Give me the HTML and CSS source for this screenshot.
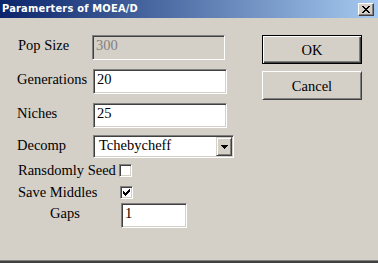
FILE: index.html
```html
<!DOCTYPE html>
<html>
<head>
<meta charset="utf-8">
<link rel="stylesheet" href="styles.css">
</head>
<body>
<div class="window">
  <div class="titlebar">
    <span class="title">Paramerters of MOEA/D</span>
    <span class="close"><svg width="8" height="7" viewBox="0 0 8 7" shape-rendering="crispEdges"><path d="M0 0h2v1h-2z M6 0h2v1h-2z M1 1h2v1h-2z M5 1h2v1h-2z M2 2h4v1h-4z M3 3h2v1h-2z M2 4h4v1h-4z M1 5h2v1h-2z M5 5h2v1h-2z M0 6h2v1h-2z M6 6h2v1h-2z" fill="#000"/></svg></span>
  </div>
  <div class="client">
    <div class="form">
      <div class="row">
        <span class="label label-pop">Pop Size</span>
        <div class="edit edit-pop disabled">300</div>
      </div>
      <div class="row row-gap">
        <span class="label">Generations</span>
        <div class="edit">20</div>
      </div>
      <div class="row row-gap">
        <span class="label">Niches</span>
        <div class="edit">25</div>
      </div>
      <div class="row row-decomp">
        <span class="label">Decomp</span>
        <div class="combo">
          <span class="combo-text">Tchebycheff</span>
          <span class="drop"><svg width="7" height="4" viewBox="0 0 7 4" shape-rendering="crispEdges"><path d="M0 0h7v1h-7z M1 1h5v1h-5z M2 2h3v1h-3z M3 3h1v1h-1z" fill="#000"/></svg></span>
        </div>
      </div>
      <div class="row row-check row-seed">
        <span class="label label-seed">Ransdomly Seed</span>
        <span class="check"></span>
      </div>
      <div class="row row-check row-save">
        <span class="label label-save">Save Middles</span>
        <span class="check"><svg width="11" height="11" viewBox="0 0 11 11" shape-rendering="crispEdges"><path d="M2 4h1v3h-1z M3 5h1v3h-1z M4 6h1v3h-1z M5 5h1v3h-1z M6 4h1v3h-1z M7 3h1v3h-1z M8 2h1v3h-1z" fill="#000"/></svg></span>
      </div>
      <div class="row row-gaps">
        <span class="label label-gaps">Gaps</span>
        <div class="edit edit-gaps">1</div>
      </div>
    </div>
    <div class="buttons">
      <div class="btn btn-default">OK</div>
      <div class="btn">Cancel</div>
    </div>
  </div>
</div>
</body>
</html>
```

FILE: styles.css
```css
html, body {
  margin: 0;
  padding: 0;
}
body {
  width: 378px;
  height: 263px;
  overflow: hidden;
  background: #d4d0c8;
  font-family: "Liberation Serif", "Times New Roman", serif;
  font-size: 14.5px;
  color: #000;
}
.window {
  height: 263px;
  box-sizing: border-box;
  border-bottom: 2px solid #404040;
  box-shadow: inset 0 -1px #808080;
}
.titlebar {
  height: 18px;
  display: flex;
  justify-content: space-between;
  align-items: flex-start;
  padding: 0 4px 0 2px;
  background: linear-gradient(to right, #0a246a, #a6caf0);
}
.title {
  color: #fff;
  font-family: "DejaVu Sans Condensed", "DejaVu Sans", sans-serif;
  font-weight: bold;
  font-size: 11px;
  line-height: 18px;
  letter-spacing: 0.2px;
}
.close {
  margin-top: 3px;
  width: 16px;
  height: 13px;
  box-sizing: border-box;
  background: #d4d0c8;
  border: 1px solid;
  border-color: #fff #404040 #404040 #fff;
  box-shadow: inset -1px -1px #808080;
  display: flex;
  align-items: center;
  justify-content: center;
}
.close svg { display: block; }
.client {
  display: flex;
  padding: 17px 0 0 16px;
}
.form {
  width: 246px;
}
.row {
  display: flex;
  align-items: baseline;
}
.row-gap { margin-top: 9px; }
.row-decomp { margin-top: 7px; }
.label {
  flex: 0 0 77px;
  box-sizing: border-box;
  padding-left: 1px;
  line-height: 16px;
  white-space: nowrap;
}
.label-pop {
  flex-basis: 76px;
  padding-left: 2px;
}
.edit {
  width: 134px;
  height: 25px;
  box-sizing: border-box;
  padding: 1px 3px 0 3px;
  line-height: 16px;
  background: #fff;
  border: 1px solid;
  border-color: #808080 #fff #fff #808080;
  box-shadow: inset 1px 1px #404040, inset -1px -1px #d4d0c8;
}
.edit-pop { width: 133px; }
.disabled {
  background: #d4d0c8;
  color: #808080;
}
.combo {
  width: 141px;
  height: 23px;
  box-sizing: border-box;
  padding: 1px;
  display: flex;
  background: #fff;
  border: 1px solid;
  border-color: #808080 #fff #fff #808080;
  box-shadow: inset 1px 1px #404040, inset -1px -1px #d4d0c8;
}
.combo-text {
  flex: 1;
  padding-left: 4px;
  line-height: 16px;
}
.drop {
  width: 16px;
  box-sizing: border-box;
  background: #d4d0c8;
  border: 1px solid;
  border-color: #d4d0c8 #404040 #404040 #d4d0c8;
  box-shadow: inset 1px 1px #fff, inset -1px -1px #808080;
  display: flex;
  align-items: center;
  justify-content: center;
}
.drop svg { display: block; margin-top: 1px; }
.row-check {
  align-items: flex-start;
}
.row-seed { margin-top: 4px; }
.row-save { margin-top: 6px; }
.label-seed {
  flex-basis: 103px;
  padding-left: 2px;
}
.label-save {
  flex-basis: 104px;
  padding-left: 2px;
}
.check {
  margin-top: 2px;
  width: 13px;
  height: 13px;
  box-sizing: border-box;
  background: #fff;
  border: 1px solid;
  border-color: #808080 #fff #fff #808080;
  box-shadow: inset 1px 1px #404040, inset -1px -1px #d4d0c8;
}
.check svg { display: block; }
.row-gaps { margin-top: 3px; }
.label-gaps {
  flex-basis: 105px;
  padding-left: 34px;
}
.edit-gaps { width: 66px; }
.buttons {
  display: flex;
  flex-direction: column;
  gap: 7px;
}
.btn {
  width: 100px;
  height: 29px;
  box-sizing: border-box;
  display: flex;
  align-items: center;
  justify-content: center;
  line-height: 16px;
  background: #d4d0c8;
  border: 1px solid;
  border-color: #fff #404040 #404040 #fff;
  box-shadow: inset 1px 1px #d4d0c8, inset -1px -1px #808080;
}
.btn-default {
  border-color: #000;
  box-shadow: inset 1px 1px #fff, inset -1px -1px #404040, inset -2px -2px #808080;
}
```
